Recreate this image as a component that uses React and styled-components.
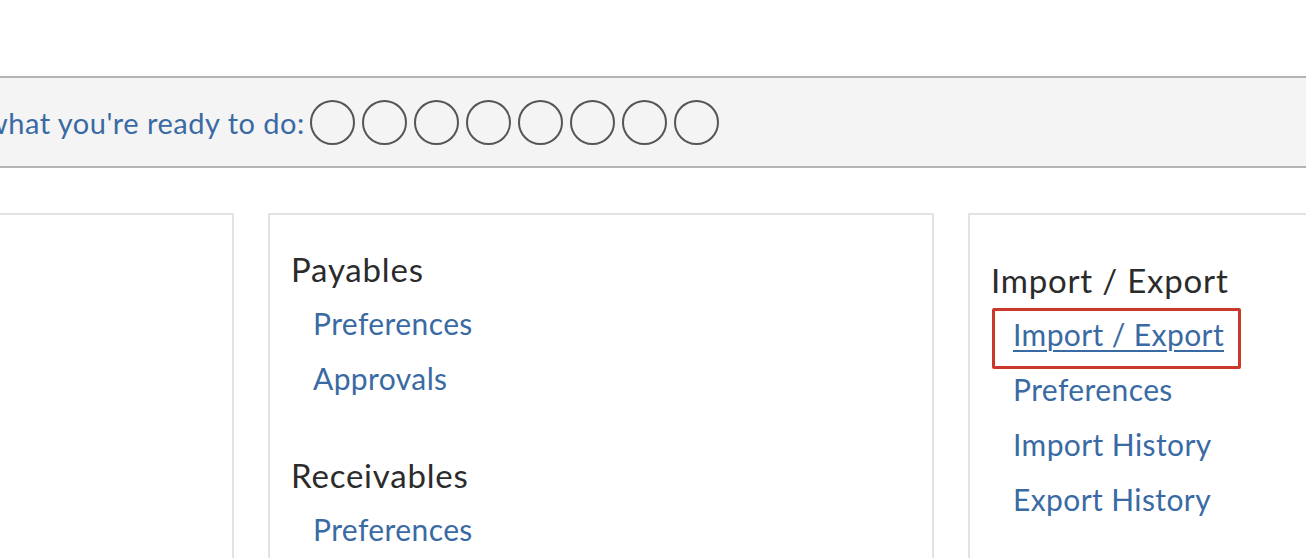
import React from "react";
import styled, { createGlobalStyle } from "styled-components";

const GlobalStyle = createGlobalStyle`
  html, body {
    margin: 0;
    padding: 0;
    background: #ffffff;
    overflow: hidden;
  }
  body {
    font-family: Lato, "Open Sans", "Liberation Sans", sans-serif;
  }
`;

// start StepBar
const Page = styled.div`
  width: 1306px;
  height: 558px;
  overflow: hidden;
  padding-top: 76px;
  box-sizing: border-box;
`;

const StepBar = styled.div`
  display: flex;
  align-items: center;
  height: 92px;
  box-sizing: border-box;
  background-color: #f4f4f4;
  border-top: 2px solid #b4b4b4;
  border-bottom: 2px solid #b4b4b4;
`;

const StepLabel = styled.span`
  margin-left: -15px;
  margin-right: 5px;
  font-size: 29px;
  letter-spacing: 0.5px;
  color: #3a6aa3;
  white-space: nowrap;
`;

const Dots = styled.div`
  display: flex;
  gap: 7px;
`;

const Dot = styled.span`
  flex: 0 0 auto;
  width: 41px;
  height: 41px;
  border: 2px solid #555555;
  border-radius: 50%;
  background: ${(props) => (props.done ? "#555555" : "transparent")};
`;
// end StepBar

// start Panels
const PanelRow = styled.div`
  display: flex;
  gap: 34px;
  margin-top: 45px;
  margin-left: -432px;
`;

const Panel = styled.section`
  flex: 0 0 666px;
  min-height: 400px;
  box-sizing: border-box;
  border: 2px solid #e3e3e3;
  padding: ${(props) => props.top || 31}px 21px 0;
`;

const Group = styled.div`
  & + & {
    margin-top: 46px;
  }
`;

const GroupTitle = styled.h2`
  margin: 0 0 4px;
  font-size: 33px;
  font-weight: 400;
  letter-spacing: 0.8px;
  line-height: 46px;
  color: #2b2b2b;
`;

const LinkList = styled.ul`
  margin: 0;
  padding: 0 0 0 22px;
  list-style: none;
`;

const LinkItem = styled.li`
  font-size: 30px;
  letter-spacing: 0.4px;
  line-height: 55px;
`;

const NavLink = styled.a`
  position: relative;
  color: #3a6aa3;
  text-decoration: ${(props) => (props.highlight ? "underline" : "none")};
  text-underline-offset: 4px;
  text-decoration-thickness: 2px;
  cursor: pointer;

  ${(props) =>
    props.highlight &&
    `
    &::after {
      content: "";
      position: absolute;
      top: -8px;
      bottom: -17px;
      left: -21px;
      right: -17px;
      border: 3px solid #c9382a;
      border-radius: 2px;
    }
  `}
`;
// end Panels

const groupsMiddle = [
  { title: "Payables", links: ["Preferences", "Approvals"] },
  { title: "Receivables", links: ["Preferences", "Approvals"] },
];

const groupsRight = [
  {
    title: "Import / Export",
    links: ["Import / Export", "Preferences", "Import History", "Export History"],
  },
];

const renderGroups = (groups, highlighted) =>
  groups.map((group) => (
    <Group key={group.title}>
      <GroupTitle>{group.title}</GroupTitle>
      <LinkList>
        {group.links.map((link) => (
          <LinkItem key={link}>
            <NavLink highlight={highlighted === link ? 1 : 0}>{link}</NavLink>
          </LinkItem>
        ))}
      </LinkList>
    </Group>
  ));

const App = () => {
  return (
    <>
      <GlobalStyle />
      <Page>
        <StepBar>
          <StepLabel>what you're ready to do:</StepLabel>
          <Dots>
            {Array.from({ length: 8 }).map((_, i) => (
              <Dot key={i} />
            ))}
          </Dots>
        </StepBar>

        <PanelRow>
          <Panel />
          <Panel>{renderGroups(groupsMiddle)}</Panel>
          <Panel top={42}>{renderGroups(groupsRight, "Import / Export")}</Panel>
        </PanelRow>
      </Page>
    </>
  );
};

export default App;
